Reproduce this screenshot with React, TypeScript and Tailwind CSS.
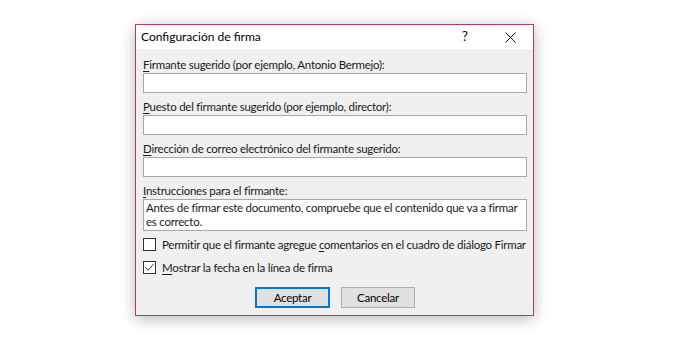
import React from "react";

const font = { fontFamily: 'Lato, "Noto Sans", sans-serif' };

function Field({ accessKey, rest }: { accessKey: string; rest: string }) {
  return (
    <div className="mb-[6px]">
      <div className="h-[15px] mb-[1px] leading-[15px] text-[11.5px] tracking-[-0.25px] text-[#1a1a1a]">
        <u className="underline-offset-2">{accessKey}</u>
        {rest}
      </div>
      <div className="h-[20px] border border-[#a8a8a8] bg-white" />
    </div>
  );
}

function CheckRow({ checked, children }: { checked?: boolean; children: React.ReactNode }) {
  return (
    <div className="flex items-center h-[13px] mb-[10px]">
      <div className="w-[13px] h-[13px] border border-[#333] bg-white flex items-center justify-center shrink-0">
        {checked && (
          <svg width="11" height="11" viewBox="0 0 11 11">
            <path d="M1.5 5.5 L4.2 8.3 L9.5 2.2" fill="none" stroke="#333" strokeWidth="1" />
          </svg>
        )}
      </div>
      <span className="ml-[6px] text-[11.5px] tracking-[-0.25px] leading-[15px] text-[#1a1a1a] whitespace-nowrap">
        {children}
      </span>
    </div>
  );
}

export default function App() {
  return (
    <div className="w-[674px] h-[355px] bg-white pt-[24px] pl-[135px]" style={font}>
      <div className="w-[399px] h-[292px] border border-[#b23c60] bg-[#f0f0f0] flex flex-col shadow-[0_3px_14px_rgba(0,0,0,0.28)]">
        {/* barra de título */}
        <div className="h-[24px] bg-white flex items-center shrink-0">
          <span className="ml-[5px] text-[12px] text-black">Configuración de firma</span>
          <span className="ml-auto w-[20px] text-center text-[13px] text-black">?</span>
          <div className="w-[45px] ml-[13px] flex justify-center items-center">
            <svg width="11" height="11" viewBox="0 0 11 11">
              <path d="M0.5 0.5 L10.5 10.5 M10.5 0.5 L0.5 10.5" stroke="#111" strokeWidth="1" />
            </svg>
          </div>
        </div>

        <div className="flex-1 pt-[8px] pl-[7px] pr-[6px]">
          <Field accessKey="F" rest="irmante sugerido (por ejemplo, Antonio Bermejo):" />
          <Field accessKey="P" rest="uesto del firmante sugerido (por ejemplo, director):" />
          <Field accessKey="D" rest="irección de correo electrónico del firmante sugerido:" />

          <div className="h-[15px] mb-[1px] leading-[15px] text-[11.5px] tracking-[-0.25px] text-[#1a1a1a]">
            <u className="underline-offset-2">I</u>nstrucciones para el firmante:
          </div>
          <div className="h-[32px] border border-[#a8a8a8] bg-white px-[2px] pt-[1px] text-[11.5px] tracking-[-0.25px] leading-[14px] text-[#1a1a1a]">
            Antes de firmar este documento, compruebe que el contenido que va a firmar es correcto.
          </div>

          <div className="mt-[7px]">
            <CheckRow>
              Permitir que el firmante agregue <u className="underline-offset-2">c</u>omentarios en el cuadro de diálogo Firmar
            </CheckRow>
            <CheckRow checked>
              <u className="underline-offset-2">M</u>ostrar la fecha en la línea de firma
            </CheckRow>
          </div>

          <div className="flex justify-center gap-[11px] mt-[13px]">
            <button className="w-[75px] h-[21px] border-2 border-[#0078d7] bg-[#e1e1e1] text-[11.5px] tracking-[-0.25px] text-black leading-none">
              Aceptar
            </button>
            <button className="w-[74px] h-[21px] border border-[#adadad] bg-[#e1e1e1] text-[11.5px] tracking-[-0.25px] text-black leading-none">
              Cancelar
            </button>
          </div>
        </div>
      </div>
    </div>
  );
}
